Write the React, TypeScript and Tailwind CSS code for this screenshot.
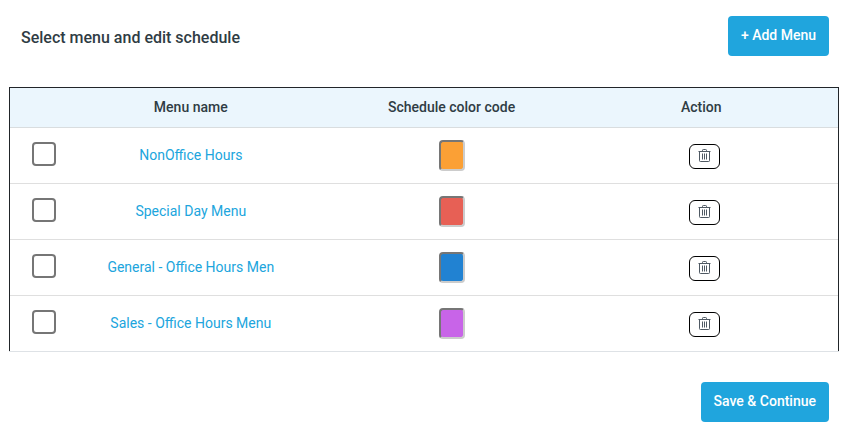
import React from "react";

type Menu = { id: string; name: string; color: string };

const menus: Menu[] = [
  { id: "non-office", name: "NonOffice Hours", color: "bg-[#fba035]" },
  { id: "special-day", name: "Special Day Menu", color: "bg-[#e76055]" },
  { id: "general", name: "General - Office Hours Men", color: "bg-[#2182d2]" },
  { id: "sales", name: "Sales - Office Hours Menu", color: "bg-[#c864e8]" },
];

function TrashIcon() {
  return (
    <svg
      viewBox="0 0 13 13"
      className="size-[13px]"
      fill="none"
      stroke="#4f5963"
      strokeWidth="1"
      aria-hidden="true"
    >
      <path d="M.5 2.5h12" />
      <path d="M4.5 2.5V1.3Q4.5.5 5.3.5h2.4q.8 0 .8.8v1.2" />
      <path d="M1.5 2.5v9.2q0 .8.8.8h8.4q.8 0 .8-.8V2.5" />
      <path d="M4.5 4.5v6M6.5 4.5v6M8.5 4.5v6" />
    </svg>
  );
}

function PrimaryButton({ children }: { children: React.ReactNode }) {
  return (
    <button
      type="button"
      className="h-10 rounded bg-[#20a5dd] px-[13px] pb-0.5 text-sm font-medium text-white"
    >
      {children}
    </button>
  );
}

export default function App() {
  return (
    <main className="bg-white pt-4 pr-[18px] pb-5 pl-[9px] font-['Roboto',sans-serif] text-[#2f3c44]">
      <header className="flex items-center justify-between pr-[10px] pl-3">
        <h1 className="pt-1 text-base font-medium">Select menu and edit schedule</h1>
        <PrimaryButton>+ Add Menu</PrimaryButton>
      </header>

      <div className="mt-[31px] border-b border-[#dee2e6]">
        <div className="border-x border-t border-[#212529]">
          <table className="w-full table-fixed border-separate border-spacing-0 text-center text-sm">
            <thead>
              <tr className="h-10 bg-[#ebf6fd] [&>th]:border-b [&>th]:border-[#d9dddf] [&>th]:pb-0.5 [&>th]:font-medium">
                <th scope="col" aria-label="Select" className="w-[69px]" />
                <th scope="col" className="w-[27%]">
                  Menu name
                </th>
                <th scope="col" className="w-[36%]">
                  Schedule color code
                </th>
                <th scope="col" className="pr-9">
                  Action
                </th>
              </tr>
            </thead>
            <tbody className="[&>tr:last-child>td]:border-b-0 [&>tr:last-child]:h-[55px]">
              {menus.map((menu) => (
                <tr key={menu.id} className="h-14 [&>td]:border-b [&>td]:border-[#dfdfdf]">
                  <td className="pr-0.5">
                    <input
                      type="checkbox"
                      aria-label={menu.name}
                      className="mx-auto mb-1 block size-6 appearance-none rounded border-2 border-[#767676] bg-white checked:bg-[#20a5dd]"
                    />
                  </td>
                  <td className="pb-0.5">
                    <a href={`#${menu.id}`} className="text-[#20a5dd]">
                      {menu.name}
                    </a>
                  </td>
                  <td>
                    <button
                      type="button"
                      aria-label={`Color of ${menu.name}`}
                      className={`mx-auto block h-[31px] w-[26px] rounded border-2 border-t-[#767676] border-r-[#cccccc] border-b-[#cccccc] border-l-[#767676] ${menu.color}`}
                    />
                  </td>
                  <td className="pr-[29px]">
                    <button
                      type="button"
                      aria-label={`Delete ${menu.name}`}
                      className="mx-auto mt-0.5 flex h-[25px] w-[31px] items-center justify-center rounded-md border border-black bg-white pb-0.5"
                    >
                      <TrashIcon />
                    </button>
                  </td>
                </tr>
              ))}
            </tbody>
          </table>
        </div>
      </div>

      <footer className="mt-[30px] flex justify-end pr-[10px]">
        <PrimaryButton>Save &amp; Continue</PrimaryButton>
      </footer>
    </main>
  );
}
